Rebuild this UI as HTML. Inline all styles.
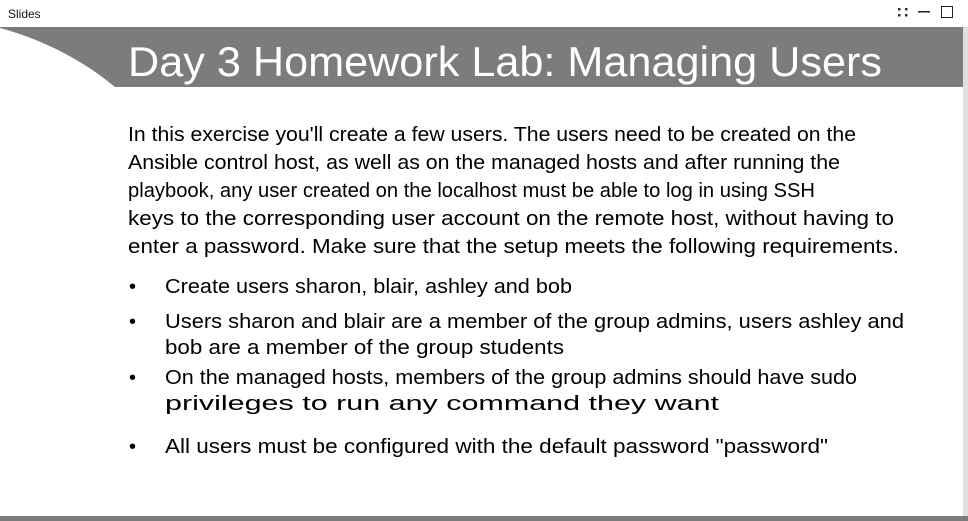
<!DOCTYPE html>
<html><head><meta charset="utf-8"><style>
html,body{margin:0;padding:0;width:968px;height:521px;overflow:hidden;background:#fff}
</style></head><body>
<svg width="968" height="521" viewBox="0 0 968 521" xmlns="http://www.w3.org/2000/svg" style="display:block">
<rect width="968" height="521" fill="#fff"/>
<text x="8" y="18" font-family="Liberation Sans, sans-serif" font-size="12" fill="#111">Slides</text>
<g fill="#333">
<rect x="898" y="8" width="2.5" height="2.5"/><rect x="905" y="8" width="2.5" height="2.5"/><rect x="898" y="14" width="2.5" height="2.5"/><rect x="905" y="14" width="2.5" height="2.5"/>
</g>
<rect x="918" y="11" width="12" height="1.5" fill="#222"/>
<rect x="941.5" y="6.5" width="11" height="11" fill="none" stroke="#222" stroke-width="1"/>
<path d="M0 27 H963 V87 H115 C85 62 45 40 0 28 Z" fill="#7b7c7e"/>
<rect x="963" y="27" width="5" height="494" fill="#e0e0e0"/>
<rect x="0" y="516" width="968" height="5" fill="#7b7c7e"/>
<text x="128" y="76" font-family="Liberation Sans, sans-serif" font-size="42" fill="#fff" textLength="754" lengthAdjust="spacingAndGlyphs">Day 3 Homework Lab: Managing Users</text>
<g font-family="Liberation Sans, sans-serif" font-size="20" fill="#000">
<text x="128" y="141" textLength="728" lengthAdjust="spacingAndGlyphs">In this exercise you'll create a few users. The users need to be created on the</text>
<text x="128" y="169" textLength="712" lengthAdjust="spacingAndGlyphs">Ansible control host, as well as on the managed hosts and after running the</text>
<text x="128" y="197" textLength="687" lengthAdjust="spacingAndGlyphs">playbook, any user created on the localhost must be able to log in using SSH</text>
<text x="128" y="225" textLength="766" lengthAdjust="spacingAndGlyphs">keys to the corresponding user account on the remote host, without having to</text>
<text x="128" y="253" textLength="771" lengthAdjust="spacingAndGlyphs">enter a password. Make sure that the setup meets the following requirements.</text>
<text x="129" y="293">•</text>
<text x="165" y="293" textLength="407" lengthAdjust="spacingAndGlyphs">Create users sharon, blair, ashley and bob</text>
<text x="129" y="328">•</text>
<text x="165" y="328" textLength="739" lengthAdjust="spacingAndGlyphs">Users sharon and blair are a member of the group admins, users ashley and</text>
<text x="165" y="354" textLength="399" lengthAdjust="spacingAndGlyphs">bob are a member of the group students</text>
<text x="129" y="384">•</text>
<text x="165" y="384" textLength="692" lengthAdjust="spacingAndGlyphs">On the managed hosts, members of the group admins should have sudo</text>
<text x="165" y="410" textLength="554" lengthAdjust="spacingAndGlyphs">privileges to run any command they want</text>
<text x="129" y="453">•</text>
<text x="165" y="453" textLength="663" lengthAdjust="spacingAndGlyphs">All users must be configured with the default password "password"</text>
</g>
</svg>
</body></html>
